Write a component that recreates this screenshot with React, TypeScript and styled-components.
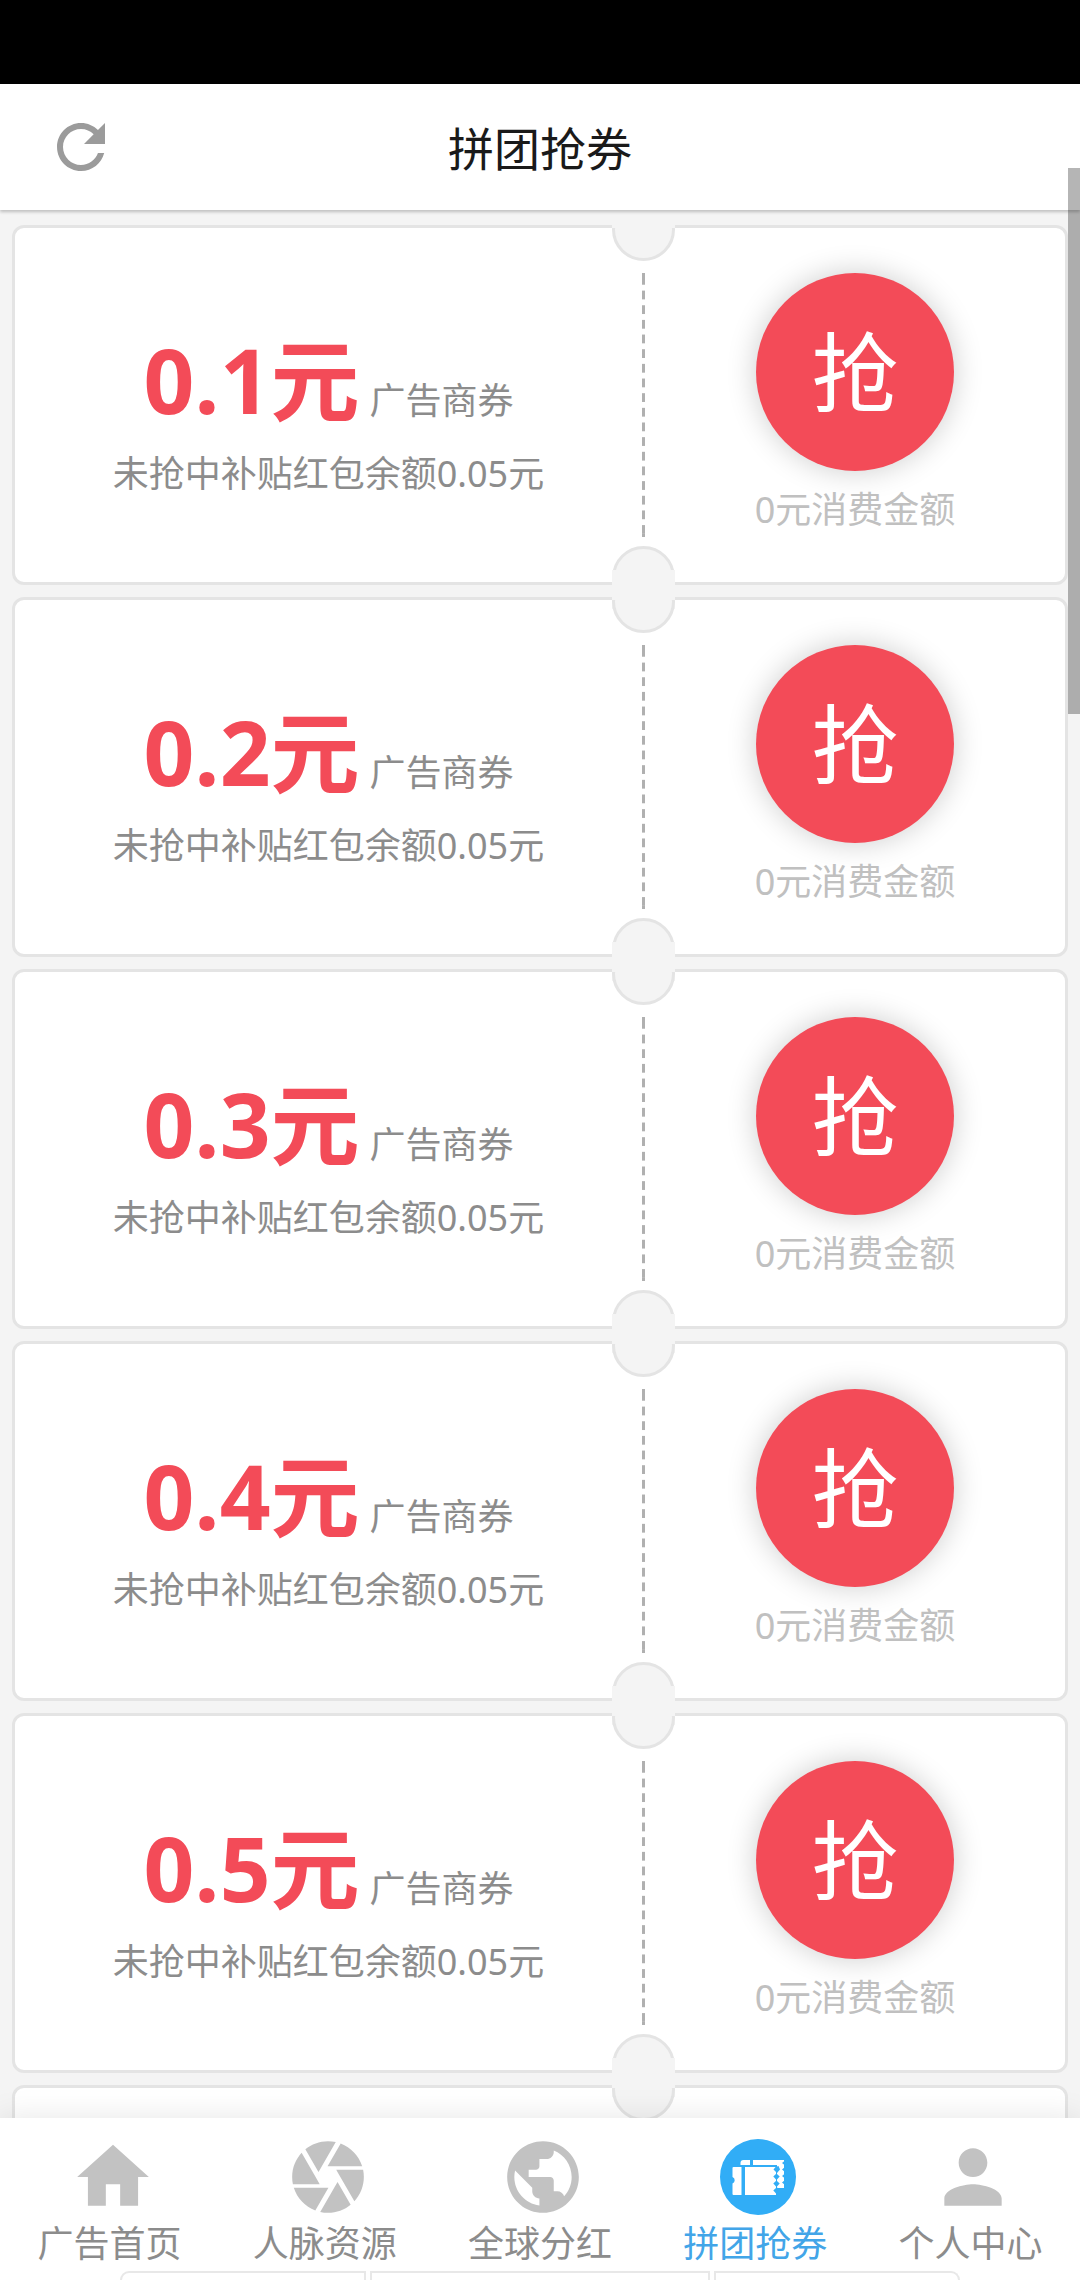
import React from "react";
import styled, { createGlobalStyle } from "styled-components";

const GlobalStyle = createGlobalStyle`
  * { box-sizing: border-box; }
  html, body { margin: 0; padding: 0; }
  body {
    background: #f4f4f4;
    font-family: "Noto Sans", "Noto Sans CJK SC", sans-serif;
  }
  button { font-family: inherit; border: 0; padding: 0; cursor: pointer; }
`;

const Screen = styled.div`
  position: relative;
  display: flex;
  flex-direction: column;
  height: 100vh;
  overflow: hidden;
`;

const StatusBar = styled.div`
  flex: none;
  height: 84px;
  background: #000;
`;

const Header = styled.header`
  flex: none;
  position: relative;
  z-index: 2;
  display: grid;
  grid-template-columns: 72px 1fr 72px;
  align-items: center;
  height: 126px;
  padding: 0 45px;
  background: #fff;
  box-shadow: 0 2px 3px rgba(0, 0, 0, 0.22);
`;

const IconButton = styled.button`
  display: flex;
  background: none;
  color: #9b9b9b;
`;

const Title = styled.h1`
  margin: 0;
  padding-top: 2px;
  font-size: 46px;
  line-height: 64px;
  font-weight: 400;
  text-align: center;
  color: #1a1a1a;
`;

const Icon = styled.svg<{ $size: number }>`
  display: block;
  width: ${(p) => p.$size}px;
  height: ${(p) => p.$size}px;
  fill: currentColor;
`;

const List = styled.main`
  flex: 1;
  min-height: 0;
  display: flex;
  flex-direction: column;
  gap: 12px;
  padding: 15px 12px;
  overflow-y: auto;
  scrollbar-width: none;
`;

const Card = styled.article`
  flex: none;
  display: grid;
  grid-template-columns: calc(60% - 3px) 3px 40%;
  min-height: 360px;
  border: 3px solid #e4e4e4;
  border-radius: 12px;
  background: #fff;
`;

const Offer = styled.div`
  display: flex;
  flex-direction: column;
  align-items: center;
  justify-content: center;
  gap: 4px;
  padding-top: 2px;
  color: #8c8c8c;
  font-size: 36px;
  line-height: 48px;
  white-space: nowrap;
`;

const PriceLine = styled.div`
  display: flex;
  align-items: baseline;
  gap: 10px;
`;

const Price = styled.strong`
  font-family: "Open Sans", "Noto Sans CJK SC", sans-serif;
  font-size: 89px;
  line-height: 132px;
  font-weight: 700;
  color: #f34b58;
`;

const Note = styled.p`
  margin: 0;
`;

const Perforation = styled.div`
  position: relative;
  grid-column: 2;
  display: flex;
  padding: 45px 0;
`;

const DashedLine = styled.div`
  flex: 1;
  background-image: linear-gradient(#b0b0b0, #b0b0b0), linear-gradient(#b0b0b0, #b0b0b0),
    linear-gradient(transparent 20%, #b0b0b0 20% 80%, transparent 80%);
  background-size: 3px 3px, 3px 3px, 3px 15px;
  background-position: top, bottom, top;
  background-repeat: no-repeat, no-repeat, no-repeat round;
`;

const Notch = styled.span<{ $edge: "top" | "bottom" }>`
  position: absolute;
  left: -30px;
  ${(p) => p.$edge}: ${(p) => (p.$edge === "top" ? -30 : -27)}px;
  width: 63px;
  height: 63px;
  border: 3px solid #e4e4e4;
  border-radius: 50%;
  background: #f4f4f4;

  &::after {
    content: "";
    position: absolute;
    left: -3px;
    right: -3px;
    ${(p) => p.$edge}: -3px;
    height: ${(p) => (p.$edge === "top" ? 30 : 39)}px;
    background: #f4f4f4;
  }
`;

const Action = styled.div`
  display: flex;
  flex-direction: column;
  align-items: center;
  gap: 15px;
  padding: 45px 0 48px;
`;

const GrabButton = styled.button`
  width: 198px;
  height: 198px;
  border-radius: 50%;
  background: #f34b58;
  color: #fff;
  font-size: 87px;
  line-height: 104px;
  box-shadow: 0 0 30px rgba(0, 0, 0, 0.2);
`;

const Spend = styled.span`
  font-size: 36px;
  line-height: 48px;
  color: #c0c0c0;
  white-space: nowrap;
`;

const Footer = styled.footer`
  flex: none;
  position: relative;
  z-index: 2;
  background: #fff;
  box-shadow: 0 0 30px rgba(0, 0, 0, 0.1);
`;

const Tabs = styled.nav`
  display: grid;
  grid-template-columns: repeat(5, 1fr);
  height: 153px;
  padding: 16px 2px 0;
`;

const Tab = styled.a<{ $active?: boolean }>`
  display: flex;
  flex-direction: column;
  align-items: center;
  color: ${(p) => (p.$active ? "#42a5e8" : "#8c8c8c")};
  font-size: 36px;
  line-height: 48px;
  text-decoration: none;
  white-space: nowrap;
`;

const TabIcon = styled.span<{ $active?: boolean }>`
  padding-left: 6px;
  color: ${(p) => (p.$active ? "#31adf6" : "#c2c2c2")};
`;

const Panels = styled.div`
  display: grid;
  grid-template-columns: 246fr 340fr 246fr;
  gap: 4px;
  height: 9px;
  padding: 0 120px;
`;

const Panel = styled.span`
  border: 2px solid #e8e8e8;
  border-bottom: 0;

  &:first-child { border-top-left-radius: 9px; }
  &:last-child { border-top-right-radius: 9px; }
`;

const ScrollThumb = styled.div`
  position: absolute;
  z-index: 3;
  top: 168px;
  right: 0;
  width: 12px;
  height: 546px;
  background: rgba(0, 0, 0, 0.29);
`;

const TicketGlyph = () => (
  <>
    <circle cx="43" cy="43" r="38" />
    <g fill="#fff">
      <path d="M25.500 31v-2a3 3 0 0 1 3-3H35v5z" />
      <path d="M38 26h31v28h-7V31H38z" />
      <path d="M18.500 33H26.500v28h-8a1 1 0 0 1-1-1v-10.500a3.500 3.500 0 0 0 0-6.500v-9a1 1 0 0 1 1-1z" />
      <path d="M30 33h31v28H30z" />
    </g>
    <path d="M60.500 33l3-1 1.500 3.500-3 3.500-3.500-3.500z" />
    <path d="M61.500 39.500l3.200 3-3.200 3.500-3.200-3.500z" />
    <path d="M61.500 46.500l3.200 3-3.200 3.500-3.200-3.500z" />
    <path d="M61.500 53.500l3.200 1-3.200 5.500-3.200-3.500z" />
    <path d="M70 26.500l-3 2.500 3 2.500zM70 33l-3 2.500 3 2.500zM70 39.500l-3 2.500 3 2.500zM70 46l-3 2.500 3 2.500z" />
  </>
);

const tabs = [
  { label: "广告首页", viewBox: "0 0 24 24", glyph: <path d="M10 20v-6h4v6h5v-8h3L12 3 2 12h3v8z" /> },
  {
    label: "人脉资源",
    viewBox: "0 0 24 24",
    glyph: (
      <path d="M9.4 10.500l4.770-8.260C13.470 2.090 12.750 2 12 2c-2.400 0-4.600.85-6.320 2.250l3.660 6.350.06-.1zM21.540 9c-.92-2.920-3.150-5.260-6-6.340L11.880 9h9.660zm.26 1h-7.490l.29.5 4.760 8.250C21 16.970 22 14.610 22 12c0-.69-.07-1.350-.2-2zM8.540 12l-3.900-6.750C3.010 7.030 2 9.390 2 12c0 .69.07 1.350.2 2h7.490l-1.150-2zm-6.080 3c.92 2.920 3.150 5.260 6 6.340L12.120 15H2.460zm11.270 0l-3.900 6.760c.7.150 1.420.24 2.170.24 2.400 0 4.600-.85 6.320-2.250l-3.660-6.350-.93 1.600z" />
    ),
  },
  {
    label: "全球分红",
    viewBox: "0 0 24 24",
    glyph: (
      <path d="M12 2C6.480 2 2 6.480 2 12s4.480 10 10 10 10-4.480 10-10S17.520 2 12 2zm-1 17.930c-3.950-.49-7-3.850-7-7.930 0-.62.08-1.210.21-1.790L9 15v1c0 1.100.9 2 2 2v1.930zm6.900-2.540c-.26-.81-1-1.390-1.900-1.390h-1v-3c0-.55-.45-1-1-1H8v-2h2c.55 0 1-.45 1-1V7h2c1.100 0 2-.9 2-2v-.41c2.930 1.190 5 4.060 5 7.410 0 2.080-.8 3.970-2.100 5.390z" />
    ),
  },
  { label: "拼团抢券", viewBox: "0 0 86 86", glyph: <TicketGlyph />, active: true },
  {
    label: "个人中心",
    viewBox: "0 0 24 24",
    glyph: (
      <path d="M12 12c2.210 0 4-1.790 4-4s-1.790-4-4-4-4 1.790-4 4 1.790 4 4 4zm0 2c-2.670 0-8 1.340-8 4v2h16v-2c0-2.660-5.330-4-8-4z" />
    ),
  },
];

const coupons = ["0.1", "0.2", "0.3", "0.4", "0.5"];

const Perforated = () => (
  <Perforation>
    <DashedLine />
    <Notch $edge="top" />
    <Notch $edge="bottom" />
  </Perforation>
);

const Coupon = ({ amount }: { amount: string }) => (
  <Card>
    <Offer>
      <PriceLine>
        <Price>{amount}元</Price>
        <span>广告商券</span>
      </PriceLine>
      <Note>未抢中补贴红包余额0.05元</Note>
    </Offer>
    <Perforated />
    <Action>
      <GrabButton type="button">抢</GrabButton>
      <Spend>0元消费金额</Spend>
    </Action>
  </Card>
);

const CouponPlaceholder = () => (
  <Card aria-hidden="true">
    <Perforated />
  </Card>
);

export default function App() {
  return (
    <Screen>
      <GlobalStyle />
      <StatusBar />
      <Header>
        <IconButton type="button" aria-label="刷新">
          <Icon $size={72} viewBox="0 0 24 24" aria-hidden="true">
            <path d="M17.650 6.350C16.200 4.900 14.210 4 12 4c-4.420 0-7.990 3.580-7.990 8s3.570 8 7.990 8c3.730 0 6.840-2.550 7.730-6h-2.080c-.82 2.330-3.040 4-5.650 4-3.310 0-6-2.690-6-6s2.690-6 6-6c1.660 0 3.140.69 4.220 1.780L13 11h7V4l-2.350 2.350z" />
          </Icon>
        </IconButton>
        <Title>拼团抢券</Title>
      </Header>
      <List>
        {coupons.map((amount) => (
          <Coupon key={amount} amount={amount} />
        ))}
        <CouponPlaceholder />
      </List>
      <Footer>
        <Tabs>
          {tabs.map((tab) => (
            <Tab key={tab.label} href="#" $active={tab.active} aria-current={tab.active ? "page" : undefined}>
              <TabIcon $active={tab.active}>
                <Icon $size={86} viewBox={tab.viewBox} aria-hidden="true">
                  {tab.glyph}
                </Icon>
              </TabIcon>
              {tab.label}
            </Tab>
          ))}
        </Tabs>
        <Panels aria-hidden="true">
          <Panel />
          <Panel />
          <Panel />
        </Panels>
      </Footer>
      <ScrollThumb />
    </Screen>
  );
}
